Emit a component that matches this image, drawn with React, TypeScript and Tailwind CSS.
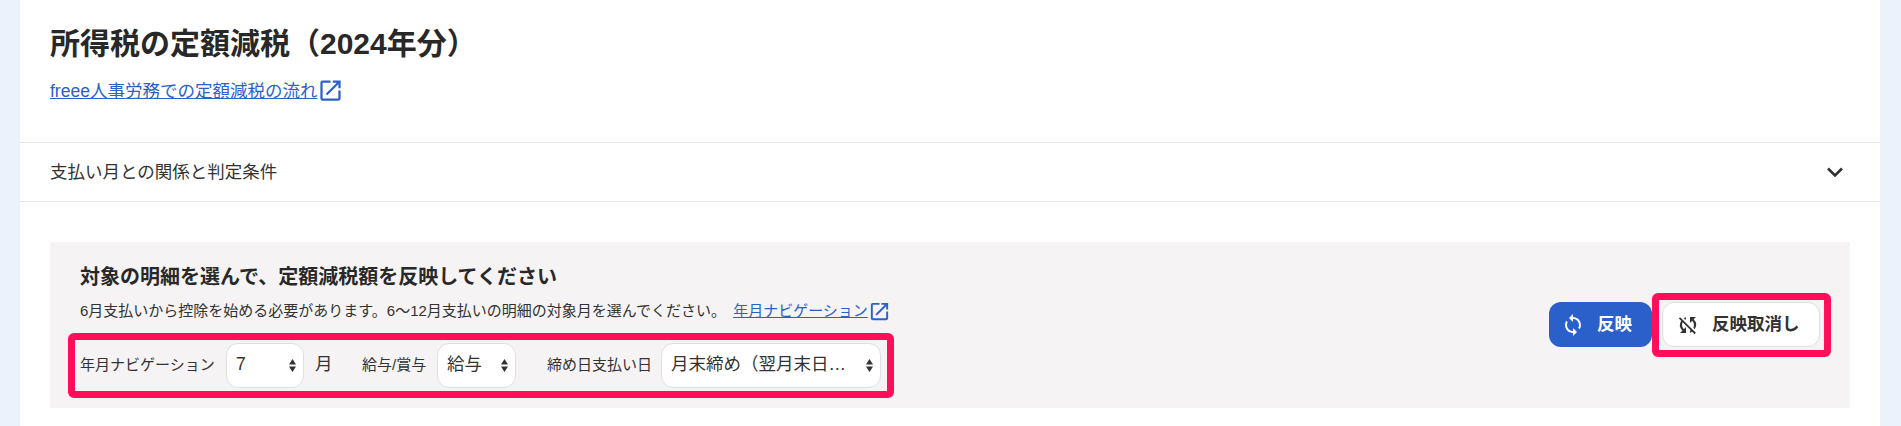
import React from 'react';
import { MdOpenInNew, MdSync, MdSyncDisabled } from 'react-icons/md';

const font = "font-['Liberation_Sans','Noto_Sans_CJK_JP',sans-serif]";

const SelectBox: React.FC<{ value: string; width: string }> = ({ value, width }) => (
  <div className={`${width} h-[45px] shrink-0 bg-white border border-[#e0dede] rounded-xl flex items-center justify-between pl-[9px] pr-[7px] text-[17.5px] text-[#323232]`}>
    <span className="whitespace-nowrap pb-[2px]">{value}</span>
    <svg width="7" height="13" viewBox="0 0 7 13" fill="#323232" className="shrink-0">
      <path d="M3.500 0 7 5.500H0zM3.500 13 0 7.500h7z" />
    </svg>
  </div>
);

const App: React.FC = () => {
  return (
    <div className={`${font} bg-[#ebf2fc] pl-5 pr-[21px] h-[426px] overflow-hidden text-[#323232]`}>
      <div className="bg-white h-full">
        <div className="h-[143px] px-[30px] pt-[24px] border-b border-[#e6e6e6]">
          <h1 className="text-[30px] leading-[40px] font-bold text-[#282828] whitespace-nowrap">所得税の定額減税（2024年分）</h1>
          <div className="mt-[13px] flex items-center">
            <a className="text-[17.5px] leading-[24px] text-[#2b5fc9] underline">freee人事労務での定額減税の流れ</a>
            <MdOpenInNew size={27} color="#2b5fc9" className="shrink-0" />
          </div>
        </div>
        <div className="h-[59px] px-[30px] border-b border-[#e6e6e6] flex items-center justify-between">
          <span className="text-[17.5px]">支払い月との関係と判定条件</span>
          <svg width="16" height="11" viewBox="0 0 16 11" fill="none" stroke="#323232" strokeWidth="2.6" className="mr-[7px]">
            <path d="M1 1.500 8 8.500l7-7" />
          </svg>
        </div>
        <div className="px-[30px] pt-[40px]">
          <div className="h-[166px] bg-[#f5f3f4] px-[30px] pt-[21px] flex justify-between">
            <div>
              <h2 className="text-[20px] leading-[28px] font-bold text-[#282828]">対象の明細を選んで、定額減税額を反映してください</h2>
              <div className="mt-[8px] flex items-center text-[15px] leading-[24px]">
                <span>6月支払いから控除を始める必要があります。6～12月支払いの明細の対象月を選んでください。</span>
                <a className="ml-[7px] text-[#2b5fc9] underline">年月ナビゲーション</a>
                <MdOpenInNew size={23} color="#2b5fc9" className="shrink-0" />
              </div>
              <div className="relative mt-[20px] flex items-center">
                <div className="absolute left-[-12px] top-[-10px] w-[826px] h-[65px] border-[7px] border-[#ff0f5a] rounded-[6px] pointer-events-none" />
                <span className="text-[15px] w-[146px] shrink-0">年月ナビゲーション</span>
                <SelectBox value="7" width="w-[78px]" />
                <span className="ml-[11px] text-[17.5px] w-[47px] shrink-0 pb-[2px]">月</span>
                <span className="text-[15px] w-[75px] shrink-0">給与/賞与</span>
                <SelectBox value="給与" width="w-[79px]" />
                <span className="ml-[31px] text-[15px] w-[114px] shrink-0">締め日支払い日</span>
                <SelectBox value="月末締め（翌月末日…" width="w-[220px]" />
              </div>
            </div>
            <div className="flex items-start gap-[10px] pt-[39px]">
              <button className="w-[103px] h-[45px] rounded-xl bg-[#2b5fc9] text-white text-[17.5px] font-bold flex items-center gap-[12px] pl-[12px]">
                <MdSync size={24} />
                反映
              </button>
              <div className="relative">
                <div className="absolute left-[-10px] top-[-9px] w-[179px] h-[64px] border-[7px] border-[#ff0f5a] rounded-[6px] pointer-events-none" />
                <button className="w-[158px] h-[45px] rounded-xl bg-white border border-[#e0dede] text-[#323232] text-[17.5px] font-bold flex items-center gap-[12px] pl-[13px]">
                  <MdSyncDisabled size={24} />
                  反映取消し
                </button>
              </div>
            </div>
          </div>
        </div>
      </div>
    </div>
  );
};

export default App;
